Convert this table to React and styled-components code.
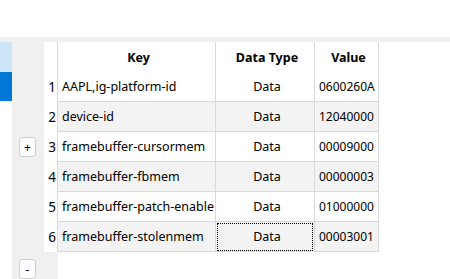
import React from "react";
import styled, { createGlobalStyle } from "styled-components";

const Global = createGlobalStyle`
  html, body { margin: 0; padding: 0; background: #fff; }
  body { width: 450px; height: 279px; overflow: hidden; font-family: "Noto Sans", "Noto Sans CJK SC", sans-serif; font-size: 12.5px; color: #000; }
`;

const Page = styled.div`
  display: flex;
  flex-direction: column;
  height: 279px;
`;

const TopSpace = styled.div`
  height: 37px;
  background: #fff;
`;

const Band = styled.div`
  height: 5px;
  background: #f0f0f0;
`;

const Main = styled.div`
  flex: 1;
  display: flex;
  min-height: 0;
`;

const Sidebar = styled.div`
  width: 12px;
  display: flex;
  flex-direction: column;
  background: #fff;
`;

const SideItem = styled.div`
  height: ${(p) => p.$h}px;
  background: ${(p) => (p.$active ? "#0078d7" : "#cce4f7")};
`;

const ButtonColumn = styled.div`
  width: 32px;
  background: #f0f0f0;
  position: relative;
`;

const SmallButton = styled.button`
  position: absolute;
  left: 7px;
  top: ${(p) => p.$top}px;
  width: 17px;
  height: 20px;
  padding: 0;
  border: 1px solid #d0d0d0;
  border-radius: 3px;
  background: #fdfdfd;
  font-family: "Noto Sans", sans-serif;
  font-size: 12px;
  line-height: 17px;
  color: #000;
  text-align: center;
`;

const TableArea = styled.div`
  flex: 1;
  background: #fff;
  position: relative;
`;

const RowHeaderBg = styled.div`
  position: absolute;
  left: 0;
  top: 0;
  bottom: 0;
  width: 14px;
  background: #f0f0f0;
`;

const Grid = styled.div`
  position: relative;
  display: grid;
  grid-template-columns: 14px 158px 99px 64px;
  grid-auto-rows: 30px;
  width: 335px;
`;

const Cell = styled.div`
  box-sizing: border-box;
  display: flex;
  align-items: center;
  justify-content: ${(p) => (p.$align === "center" ? "center" : p.$align === "right" ? "flex-end" : "flex-start")};
  padding: ${(p) => (p.$num ? "0 1px 0 0" : "0 0 0 4px")};
  border-right: 1px solid #d9d9d9;
  border-bottom: ${(p) => (p.$noBottom ? "none" : "1px solid #d9d9d9")};
  background: ${(p) => (p.$alt ? "#f3f3f3" : "#fff")};
  font-weight: ${(p) => (p.$head ? 700 : 400)};
  font-size: ${(p) => (p.$num ? "13.5px" : p.$small ? "12px" : "inherit")};
  white-space: nowrap;
  position: relative;
`;

const Focus = styled.div`
  position: absolute;
  left: 1px;
  top: 1px;
  right: 1px;
  bottom: 0px;
  border: 1px dotted #000;
  pointer-events: none;
`;

const rows = [
  ["AAPL,ig-platform-id", "Data", "0600260A"],
  ["device-id", "Data", "12040000"],
  ["framebuffer-cursormem", "Data", "00009000"],
  ["framebuffer-fbmem", "Data", "00000003"],
  ["framebuffer-patch-enable", "Data", "01000000"],
  ["framebuffer-stolenmem", "Data", "00003001"],
];

export default function App() {
  return (
    <>
      <Global />
      <Page>
        <TopSpace />
        <Band />
        <Main>
          <Sidebar>
            <SideItem $h={30} />
            <SideItem $h={29} $active />
          </Sidebar>
          <ButtonColumn>
            <SmallButton $top={95}>+</SmallButton>
            <SmallButton $top={217}>-</SmallButton>
          </ButtonColumn>
          <TableArea>
            <RowHeaderBg />
            <Grid>
              <Cell $noBottom />
              <Cell $head $align="center" $noBottom>Key</Cell>
              <Cell $head $align="center" $noBottom>Data Type</Cell>
              <Cell $head $align="center" $noBottom>Value</Cell>
              {rows.map((r, i) => {
                const alt = i % 2 === 1;
                return (
                  <React.Fragment key={i}>
                    <Cell $num $align="right" $noBottom>{i + 1}</Cell>
                    <Cell $alt={alt}>{r[0]}</Cell>
                    <Cell $alt={alt} $align="center">
                      {r[1]}
                      {i === 5 && <Focus />}
                    </Cell>
                    <Cell $alt={alt} $small>{r[2]}</Cell>
                  </React.Fragment>
                );
              })}
            </Grid>
          </TableArea>
        </Main>
      </Page>
    </>
  );
}
